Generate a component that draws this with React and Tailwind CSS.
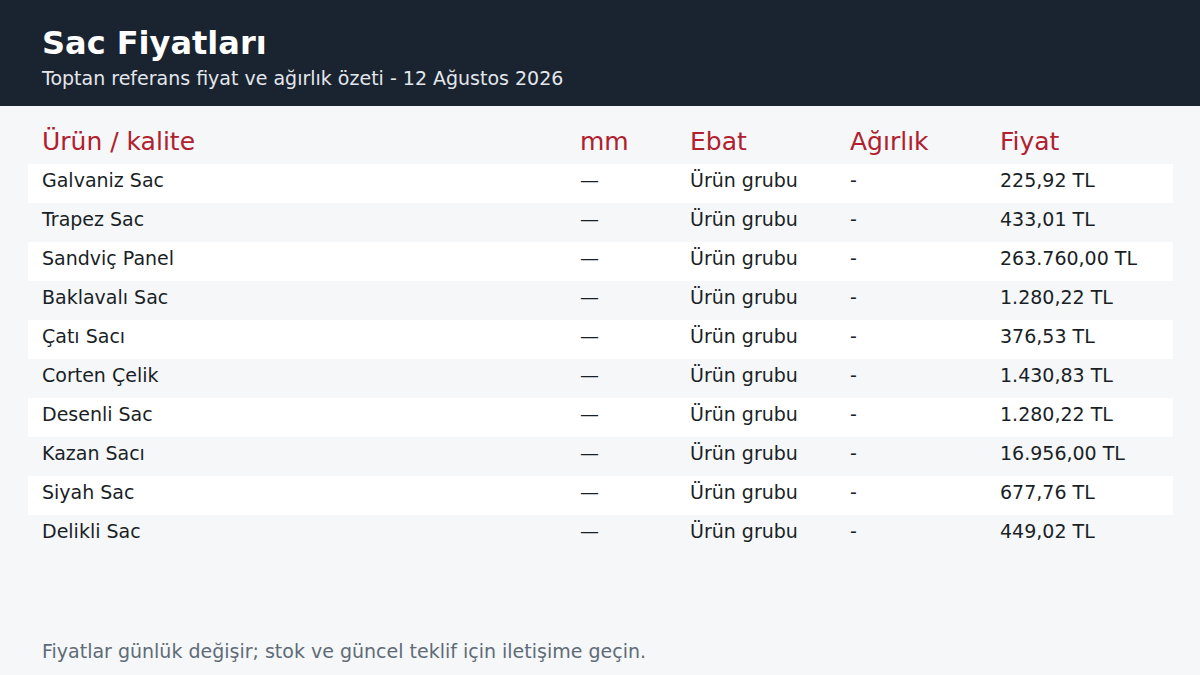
import React from "react";

const rows = [
  ["Galvaniz Sac", "225,92 TL"],
  ["Trapez Sac", "433,01 TL"],
  ["Sandviç Panel", "263.760,00 TL"],
  ["Baklavalı Sac", "1.280,22 TL"],
  ["Çatı Sacı", "376,53 TL"],
  ["Corten Çelik", "1.430,83 TL"],
  ["Desenli Sac", "1.280,22 TL"],
  ["Kazan Sacı", "16.956,00 TL"],
  ["Siyah Sac", "677,76 TL"],
  ["Delikli Sac", "449,02 TL"],
];

export default function App() {
  return (
    <div
      className="w-[1200px] h-[675px] bg-[#f5f7f9] flex flex-col overflow-hidden"
      style={{ fontFamily: '"DejaVu Sans", sans-serif' }}
    >
      <div className="h-[106px] bg-[#1a2330] px-[42px] pt-[23px]">
        <div className="text-[32px] leading-[40px] font-bold text-white">Sac Fiyatları</div>
        <div className="text-[19px] leading-[26px] text-[#e3e7ec] mt-[2px]">
          Toptan referans fiyat ve ağırlık özeti - 12 Ağustos 2026
        </div>
      </div>
      <div className="pl-[28px] pr-[27px] pt-[18px] flex-1">
        <div className="grid grid-cols-[552px_110px_160px_150px_1fr] h-[40px] text-[25px] leading-[36px] text-[#b0202e]">
          <div className="pl-[14px]">Ürün / kalite</div>
          <div>mm</div>
          <div>Ebat</div>
          <div>Ağırlık</div>
          <div>Fiyat</div>
        </div>
        {rows.map(([name, price], i) => (
          <div
            key={name}
            className={
              "grid grid-cols-[552px_110px_160px_150px_1fr] h-[39px] text-[19px] leading-[33px] text-[#1a1f26] " +
              (i % 2 === 0 ? "bg-white" : "")
            }
          >
            <div className="pl-[14px]">{name}</div>
            <div>—</div>
            <div>Ürün grubu</div>
            <div>-</div>
            <div>{price}</div>
          </div>
        ))}
      </div>
      <div className="px-[42px] pb-[11px] text-[19px] leading-[26px] text-[#5f6b76]">
        Fiyatlar günlük değişir; stok ve güncel teklif için iletişime geçin.
      </div>
    </div>
  );
}
